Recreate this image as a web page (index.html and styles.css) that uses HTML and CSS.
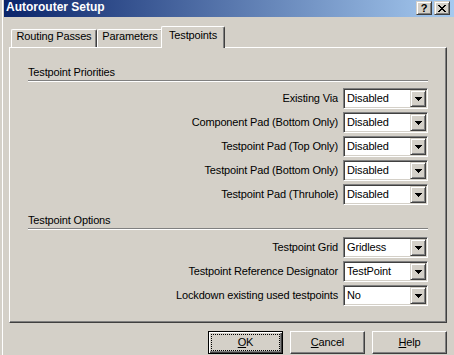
FILE: index.html
```html
<!DOCTYPE html>
<html>
<head>
<meta charset="utf-8">
<title>Autorouter Setup</title>
<link rel="stylesheet" href="styles.css">
</head>
<body>
<div class="window">
  <div class="titlebar">
    <span class="title">Autorouter Setup</span>
    <div class="capbtns">
      <span class="capbtn qbtn">?</span>
      <span class="capbtn">
        <svg width="8" height="7" viewBox="0 0 8 7" shape-rendering="crispEdges"><path fill="#000" d="M0 0h2v1H0z M6 0h2v1H6z M1 1h2v1H1z M5 1h2v1H5z M2 2h4v1H2z M3 3h2v1H3z M2 4h4v1H2z M1 5h2v1H1z M5 5h2v1H5z M0 6h2v1H0z M6 6h2v1H6z"/></svg>
      </span>
    </div>
  </div>
  <div class="content">
    <div class="tabs">
      <div class="tab t1">Routing Passes</div>
      <div class="tab t2">Parameters</div>
      <div class="tab t3 active">Testpoints</div>
    </div>
    <div class="panel">
      <div class="gtitle">Testpoint Priorities</div>
      <div class="rows">
        <div class="lbl">Existing Via</div>
        <div class="combo"><span class="val">Disabled</span><span class="drop"><svg width="7" height="4" viewBox="0 0 7 4" shape-rendering="crispEdges"><path fill="#000" d="M0 0h7v1H0z M1 1h5v1H1z M2 2h3v1H2z M3 3h1v1H3z"/></svg></span></div>
        <div class="lbl">Component Pad (Bottom Only)</div>
        <div class="combo"><span class="val">Disabled</span><span class="drop"><svg width="7" height="4" viewBox="0 0 7 4" shape-rendering="crispEdges"><path fill="#000" d="M0 0h7v1H0z M1 1h5v1H1z M2 2h3v1H2z M3 3h1v1H3z"/></svg></span></div>
        <div class="lbl">Testpoint Pad (Top Only)</div>
        <div class="combo"><span class="val">Disabled</span><span class="drop"><svg width="7" height="4" viewBox="0 0 7 4" shape-rendering="crispEdges"><path fill="#000" d="M0 0h7v1H0z M1 1h5v1H1z M2 2h3v1H2z M3 3h1v1H3z"/></svg></span></div>
        <div class="lbl">Testpoint Pad (Bottom Only)</div>
        <div class="combo"><span class="val">Disabled</span><span class="drop"><svg width="7" height="4" viewBox="0 0 7 4" shape-rendering="crispEdges"><path fill="#000" d="M0 0h7v1H0z M1 1h5v1H1z M2 2h3v1H2z M3 3h1v1H3z"/></svg></span></div>
        <div class="lbl">Testpoint Pad (Thruhole)</div>
        <div class="combo"><span class="val">Disabled</span><span class="drop"><svg width="7" height="4" viewBox="0 0 7 4" shape-rendering="crispEdges"><path fill="#000" d="M0 0h7v1H0z M1 1h5v1H1z M2 2h3v1H2z M3 3h1v1H3z"/></svg></span></div>
      </div>
      <div class="gtitle g2">Testpoint Options</div>
      <div class="rows">
        <div class="lbl">Testpoint Grid</div>
        <div class="combo"><span class="val">Gridless</span><span class="drop"><svg width="7" height="4" viewBox="0 0 7 4" shape-rendering="crispEdges"><path fill="#000" d="M0 0h7v1H0z M1 1h5v1H1z M2 2h3v1H2z M3 3h1v1H3z"/></svg></span></div>
        <div class="lbl">Testpoint Reference Designator</div>
        <div class="combo"><span class="val">TestPoint</span><span class="drop"><svg width="7" height="4" viewBox="0 0 7 4" shape-rendering="crispEdges"><path fill="#000" d="M0 0h7v1H0z M1 1h5v1H1z M2 2h3v1H2z M3 3h1v1H3z"/></svg></span></div>
        <div class="lbl">Lockdown existing used testpoints</div>
        <div class="combo"><span class="val">No</span><span class="drop"><svg width="7" height="4" viewBox="0 0 7 4" shape-rendering="crispEdges"><path fill="#000" d="M0 0h7v1H0z M1 1h5v1H1z M2 2h3v1H2z M3 3h1v1H3z"/></svg></span></div>
      </div>
    </div>
    <div class="buttons">
      <div class="btn default"><span class="focus"><u>O</u>K</span></div>
      <div class="btn"><u>C</u>ancel</div>
      <div class="btn"><u>H</u>elp</div>
    </div>
  </div>
</div>
</body>
</html>
```
FILE: styles.css
```css
* { box-sizing: border-box; }
html, body { margin: 0; padding: 0; }
body {
  width: 454px;
  height: 355px;
  overflow: hidden;
  background: #D4D0C8;
  font-family: "Liberation Sans", Arial, sans-serif;
  font-size: 11px;
  letter-spacing: -0.15px;
  color: #000;
}
.window {
  width: 454px;
  height: 355px;
  padding-left: 4px;
  background: #D4D0C8;
  box-shadow: inset 2px 0 #D4D0C8, inset 3px 0 #fff;
  display: flex;
  flex-direction: column;
}
.titlebar {
  height: 17px;
  display: flex;
  align-items: flex-start;
  justify-content: space-between;
  background: linear-gradient(to right, #0A246A, #A6CAF0);
  padding: 0 4px 0 2px;
}
.title {
  color: #fff;
  font-weight: bold;
  font-size: 12px;
  letter-spacing: 0;
  line-height: 15px;
}
.capbtns {
  display: flex;
  gap: 2px;
  margin-top: 1px;
}
.capbtn {
  width: 16px;
  height: 14px;
  background: #D4D0C8;
  border: 1px solid;
  border-color: #D4D0C8 #404040 #404040 #D4D0C8;
  box-shadow: inset 1px 1px #fff, inset -1px -1px #808080;
  display: flex;
  align-items: center;
  justify-content: center;
}
.qbtn {
  font-weight: bold;
  font-size: 11px;
  line-height: 11px;
  letter-spacing: 0;
  padding-top: 1px;
}
.content {
  padding: 9px 7px 0 5px;
}
.tabs {
  display: flex;
  align-items: flex-end;
  height: 21px;
  padding-left: 2px;
}
.tab {
  height: 18px;
  border: 1px solid;
  border-bottom: 0;
  border-color: #fff #404040 #fff #fff;
  border-radius: 2px 2px 0 0;
  box-shadow: inset -1px 0 #808080;
  background: #D4D0C8;
  text-align: center;
  line-height: 13px;
  white-space: nowrap;
}
.t1 { width: 86px; }
.t2 { width: 66px; }
.t3 { width: 64px; }
.tab.active {
  height: 22px;
  margin: 0 -2px -1px;
  padding-top: 2px;
  position: relative;
  z-index: 1;
}
.panel {
  width: 438px;
  height: 276px;
  border: 1px solid;
  border-color: #fff #404040 #404040 #fff;
  box-shadow: inset -1px -1px #808080;
  padding: 18px 18px 0;
}
.gtitle {
  line-height: 13px;
  padding-bottom: 1px;
  border-bottom: 1px solid #808080;
  box-shadow: 0 1px #fff;
  margin-bottom: 7px;
  white-space: nowrap;
}
.gtitle.g2 {
  margin-top: 9px;
  margin-bottom: 8px;
}
.rows {
  display: grid;
  grid-template-columns: 1fr 85px;
  column-gap: 5px;
  row-gap: 3px;
  grid-auto-rows: 21px;
}
.lbl {
  text-align: right;
  align-self: center;
  line-height: 13px;
  white-space: nowrap;
}
.combo {
  width: 85px;
  height: 21px;
  border: 1px solid;
  border-color: #808080 #fff #fff #808080;
  box-shadow: inset 1px 1px #404040, inset -1px -1px #D4D0C8;
  background: #fff;
  padding: 1px;
  display: flex;
}
.val {
  flex: 1;
  padding-left: 2px;
  line-height: 17px;
  white-space: nowrap;
}
.drop {
  width: 16px;
  height: 17px;
  background: #D4D0C8;
  border: 1px solid;
  border-color: #D4D0C8 #404040 #404040 #D4D0C8;
  box-shadow: inset 1px 1px #fff, inset -1px -1px #808080;
  display: flex;
  align-items: center;
  justify-content: center;
}
.buttons {
  display: flex;
  justify-content: flex-end;
  gap: 7px;
  margin-top: 8px;
}
.btn {
  width: 75px;
  height: 23px;
  border: 1px solid;
  border-color: #fff #404040 #404040 #fff;
  box-shadow: inset -1px -1px #808080;
  display: flex;
  align-items: center;
  justify-content: center;
  padding-bottom: 1px;
  line-height: 13px;
}
.btn.default {
  border-color: #000;
  box-shadow: inset 1px 1px #fff, inset -1px -1px #404040, inset -2px -2px #808080;
  padding: 0;
  align-items: stretch;
}
.focus {
  flex: 1;
  margin: 2px;
  border: 1px dotted #000;
  display: flex;
  align-items: center;
  justify-content: center;
  padding-bottom: 1px;
}
u { text-underline-offset: 1px; }
```
